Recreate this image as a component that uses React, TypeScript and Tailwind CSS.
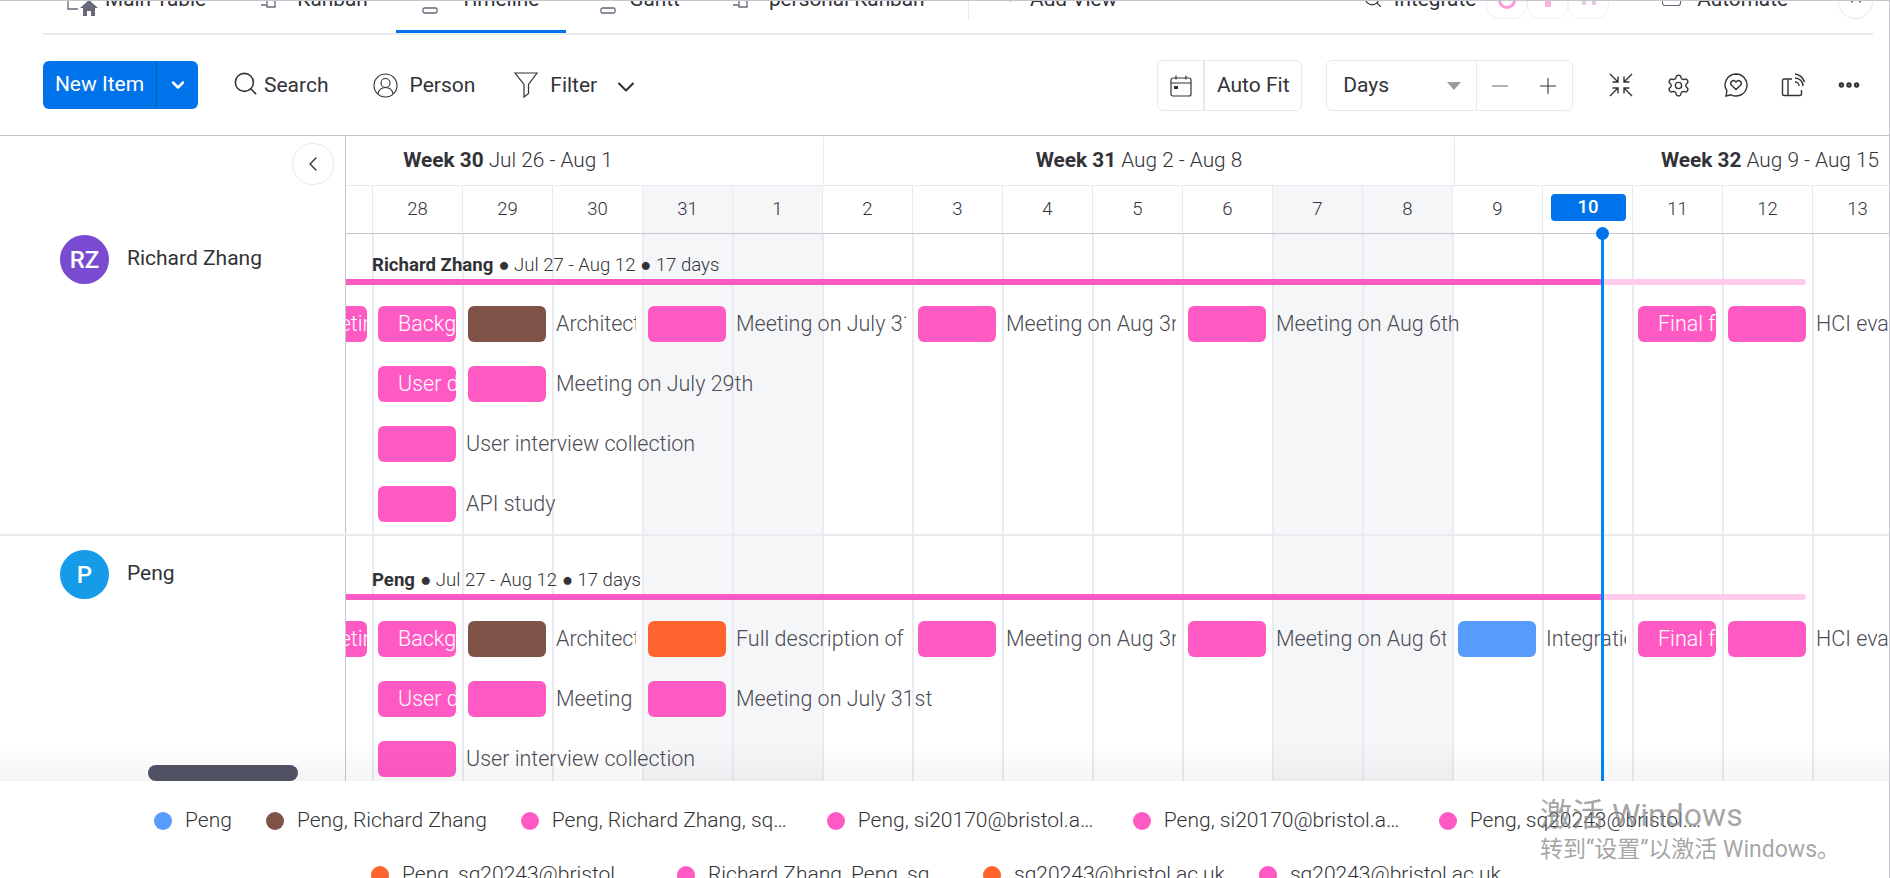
import { Search, ChevronDown, ChevronLeft, ChevronUp, Settings, Plus, Minus, Ellipsis } from "lucide-react"

const PINK = "bg-[#ff5ac4]"
const BROWN = "bg-[#7f5347]"
const ORANGE = "bg-[#ff642e]"
const BLUE = "bg-[#579bfc]"

type Item = {
  col: number
  span: number
  line: number
  color?: string
  inside?: string
  label?: string
  stub?: boolean
}

const days = ["28", "29", "30", "31", "1", "2", "3", "4", "5", "6", "7", "8", "9", "10", "11", "12", "13"]
const weekend = ["31", "1", "7", "8"]

const richardItems: Item[] = [
  { col: 0, span: 1, line: 1, inside: "Meeting", stub: true },
  { col: 1, span: 1, line: 1, inside: "Background research" },
  { col: 2, span: 2, line: 1, color: BROWN, label: "Architecture design" },
  { col: 4, span: 3, line: 1, label: "Meeting on July 31st" },
  { col: 7, span: 3, line: 1, label: "Meeting on Aug 3rd" },
  { col: 10, span: 4, line: 1, label: "Meeting on Aug 6th" },
  { col: 15, span: 1, line: 1, inside: "Final feedback" },
  { col: 16, span: 2, line: 1, label: "HCI evaluation" },
  { col: 1, span: 1, line: 2, inside: "User data" },
  { col: 2, span: 4, line: 2, label: "Meeting on July 29th" },
  { col: 1, span: 4, line: 3, label: "User interview collection" },
  { col: 1, span: 3, line: 4, label: "API study" },
]

const pengItems: Item[] = [
  { col: 0, span: 1, line: 1, inside: "Meeting", stub: true },
  { col: 1, span: 1, line: 1, inside: "Background research" },
  { col: 2, span: 2, line: 1, color: BROWN, label: "Architecture design" },
  { col: 4, span: 3, line: 1, color: ORANGE, label: "Full description of the system" },
  { col: 7, span: 3, line: 1, label: "Meeting on Aug 3rd" },
  { col: 10, span: 3, line: 1, label: "Meeting on Aug 6th" },
  { col: 13, span: 2, line: 1, color: BLUE, label: "Integration" },
  { col: 15, span: 1, line: 1, inside: "Final feedback" },
  { col: 16, span: 2, line: 1, label: "HCI evaluation" },
  { col: 1, span: 1, line: 2, inside: "User data" },
  { col: 2, span: 2, line: 2, label: "Meeting on July 29th" },
  { col: 4, span: 4, line: 2, label: "Meeting on July 31st" },
  { col: 1, span: 4, line: 3, label: "User interview collection" },
]

function TabIcon({ kind }: { kind: "kanban" | "pill" }) {
  if (kind === "pill") {
    return (
      <svg width="16" height="9" viewBox="0 0 16 9" fill="none" stroke="#676879" strokeWidth="1.3" className="mt-[14px]">
        <rect x="1" y="3" width="14" height="5" rx="1.5" />
      </svg>
    )
  }
  return (
    <svg width="18" height="20" viewBox="0 0 18 20" fill="none" stroke="#676879" strokeWidth="1.3">
      <path d="M1 4h6M7 0v6h8V0" />
    </svg>
  )
}

function TopTabs() {
  return (
    <div className="h-[34px] ml-[43px] mr-[16px] border-b-2 border-[#e6e9ef] flex text-[20.8px] leading-6 text-[#323338] relative overflow-hidden">
      <div className="w-[202px] flex">
        <svg width="32" height="16" viewBox="0 0 32 16" className="ml-[24px] shrink-0">
          <path d="M1 0v8h10" fill="none" stroke="#676879" strokeWidth="1.3" />
          <path d="M13 7l9-8 9 8h-3v8h-4V10h-4v5h-4V7z" fill="#676879" />
        </svg>
        <span className="ml-[6px] -mt-[14px]">Main Table</span>
      </div>
      <div className="w-[152px] flex">
        <div className="ml-[16px] shrink-0"><TabIcon kind="kanban" /></div>
        <span className="ml-[19px] -mt-[14px]">Kanban</span>
      </div>
      <div className="w-[171px] h-[32px] border-b-[3px] border-[#0073ea] flex">
        <div className="ml-[26px] -mt-[10px] shrink-0"><TabIcon kind="pill" /></div>
        <span className="ml-[22px] -mt-[14px]">Timeline</span>
      </div>
      <div className="w-[135px] flex">
        <div className="ml-[34px] -mt-[10px] shrink-0"><TabIcon kind="pill" /></div>
        <span className="ml-[13px] -mt-[14px]">Gantt</span>
      </div>
      <div className="w-[269px] h-[19px] border-r border-[#e6e9ef] flex">
        <div className="ml-[31px] shrink-0"><TabIcon kind="kanban" /></div>
        <span className="ml-[19px] -mt-[14px]">personal Kanban</span>
      </div>
      <div className="w-[395px] flex">
        <Plus size={18} strokeWidth={1.3} className="ml-[32px] -mt-[14px] text-[#676879]" />
        <span className="ml-[11px] -mt-[14px]">Add View</span>
      </div>
      <div className="flex">
        <Search size={20} strokeWidth={1.4} className="-mt-[12px] text-[#323338]" />
        <span className="ml-[11px] -mt-[14px]">Integrate</span>
        <div className="flex ml-[10px]">
          <div className="w-[41px] h-[18px] flex justify-center rounded-b-[14px] border-b border-x border-[#f0f1f4]">
            <div className="w-[18px] h-[18px] -mt-[10px] rounded-full border-[3px] border-[#fd9bd9]" />
          </div>
          <div className="w-[41px] h-[18px] flex justify-center rounded-b-[14px] border-b border-x border-[#f0f1f4]">
            <div className="w-[6px] h-[6px] bg-[#fbb0e0]" />
          </div>
          <div className="w-[41px] h-[18px] flex justify-center gap-[6px] rounded-b-[14px] border-b border-x border-[#f0f1f4]">
            <div className="w-[4px] h-[4px] bg-[#e6cbdc]" />
            <div className="w-[4px] h-[4px] bg-[#e6cbdc]" />
          </div>
        </div>
        <div className="ml-[53px] w-[19px] h-[5px] border-x-[1.5px] border-b-[1.5px] rounded-b-[3px] border-[#676879]" />
        <span className="ml-[16px] -mt-[14px]">Automate</span>
        <div className="ml-[50px] w-[35px] h-[18px] rounded-b-full border-x border-b border-[#e6e9ef] flex justify-center">
          <ChevronUp size={18} strokeWidth={1.4} className="-mt-[10px] text-[#323338]" />
        </div>
      </div>
    </div>
  )
}

function ShrinkIcon() {
  return (
    <svg width="24" height="24" viewBox="0 0 24 24" fill="none" stroke="#323338" strokeWidth="1.4">
      <path d="M1 1l8 8M9 3.5V9H3.5M23 1l-8 8M15 3.5V9h5.5M1 23l8-8M9 20.5V15H3.5M23 23l-8-8M15 20.5V15h5.5" />
    </svg>
  )
}

function HeartChatIcon() {
  return (
    <svg width="24" height="24" viewBox="0 0 24 24" fill="none" stroke="#323338" strokeWidth="1.4">
      <path d="M12 1a11 11 0 1 1-5 20.8L2 23l.9-5A11 11 0 0 1 12 1z" />
      <path d="M12 16.5l-4.6-4.4a2.7 2.7 0 0 1 3.8-3.8l.8.8.8-.8a2.7 2.7 0 0 1 3.8 3.8z" />
    </svg>
  )
}

function FeedIcon() {
  return (
    <svg width="24" height="24" viewBox="0 0 24 24" fill="none" stroke="#323338" strokeWidth="1.4">
      <path d="M11 6H3a1.500 1.500 0 0 0-1.500 1.500V21A1.500 1.500 0 0 0 3 22.500h16a1.500 1.500 0 0 0 1.500-1.500v-4" />
      <path d="M7 6.500v16" />
      <path d="M14 9a4 4 0 0 1 4 4M14 5a8 8 0 0 1 8 8M14 1a12 12 0 0 1 9.500 8" />
    </svg>
  )
}

function PersonIcon() {
  return (
    <svg width="25" height="25" viewBox="0 0 25 25" fill="none" stroke="#323338" strokeWidth="1.1">
      <circle cx="12.500" cy="12.500" r="11.500" />
      <circle cx="12.500" cy="10" r="4.500" />
      <path d="M4.800 21c1-4 4-6.500 7.700-6.500s6.700 2.500 7.700 6.500" />
    </svg>
  )
}

function FunnelIcon() {
  return (
    <svg width="24" height="26" viewBox="0 0 24 26" fill="none" stroke="#323338" strokeWidth="1.2">
      <path d="M1 1h22l-8.500 11.500v9L10 25V12.500z" />
    </svg>
  )
}

function CalendarIcon() {
  return (
    <svg width="22" height="22" viewBox="0 0 22 22" fill="none" stroke="#323338" strokeWidth="1.2">
      <rect x="1" y="3" width="20" height="18" rx="2" />
      <path d="M1 8h20M6 0.500v4M16 0.500v4" />
      <rect x="4" y="11" width="4" height="3" fill="#323338" stroke="none" />
    </svg>
  )
}

function Toolbar() {
  return (
    <div className="h-[101px] border-b border-[#c5c7d0] flex items-start pt-[26px] text-[#323338] text-[21px]">
      <div className="ml-[43px] w-[155px] h-[48px] rounded-[6px] bg-[#0073ea] flex text-white">
        <div className="w-[114px] h-full flex items-center justify-center border-r border-[#0060b9]">New Item</div>
        <div className="flex-1 flex items-center justify-center">
          <ChevronDown size={20} strokeWidth={3} />
        </div>
      </div>
      <div className="ml-[34px] h-[48px] flex items-center">
        <Search size={27} strokeWidth={1.4} className="-mt-[3px]" />
        <span className="ml-[5px] mt-[2px]">Search</span>
      </div>
      <div className="ml-[44px] h-[48px] flex items-center">
        <PersonIcon />
        <span className="ml-[12px] mt-[2px]">Person</span>
      </div>
      <div className="ml-[39px] h-[48px] flex items-center">
        <FunnelIcon />
        <span className="ml-[12px] mt-[2px]">Filter</span>
        <ChevronDown size={28} strokeWidth={1.8} className="ml-[15px] mt-[4px]" />
      </div>
      <div className="ml-[517px] w-[145px] h-[51px] -mt-[1px] border border-[#e6e9ef] rounded-[6px] flex">
        <div className="w-[47px] border-r-2 border-[#e6e9ef] flex items-center justify-center">
          <CalendarIcon />
        </div>
        <div className="flex-1 flex items-center justify-center">Auto Fit</div>
      </div>
      <div className="ml-[24px] w-[247px] h-[51px] -mt-[1px] border border-[#e6e9ef] rounded-[6px] flex">
        <div className="w-[150px] border-r border-[#e6e9ef] flex items-center pl-[16px]">
          <span>Days</span>
          <span className="ml-[58px] mt-[1px] w-0 h-0 border-x-[7px] border-x-transparent border-t-[8px] border-t-[#9a9a9f]" />
        </div>
        <div className="flex-1 flex items-center text-[#676879]">
          <Minus size={26} strokeWidth={1} className="ml-[10px]" />
          <Plus size={26} strokeWidth={1} className="ml-[22px] text-[#323338]" />
        </div>
      </div>
      <div className="ml-[36px] h-[48px] flex items-center gap-[33px]">
        <ShrinkIcon />
        <Settings size={25} strokeWidth={1.3} />
        <HeartChatIcon />
        <FeedIcon />
        <Ellipsis size={26} strokeWidth={3} className="-ml-[2px]" />
      </div>
    </div>
  )
}

function TimelineHeader() {
  return (
    <div className="flex h-[98px]">
      <div className="w-[346px] shrink-0 border-r border-[#c5c7d0] flex justify-end pr-[11px] pt-[7px]">
        <div className="w-[42px] h-[42px] rounded-full border border-[#e6e9ef] flex items-center justify-center bg-white">
          <ChevronLeft size={24} strokeWidth={1.4} className="text-[#323338]" />
        </div>
      </div>
      <div className="flex-1 min-w-0 overflow-hidden">
        <div className="h-[49px] pt-[1px] flex -ml-[153px] text-[20.8px] text-[#323338]">
          <WeekCell name="Week 30" range="Jul 26 - Aug 1" />
          <WeekCell name="Week 31" range="Aug 2 - Aug 8" />
          <WeekCell name="Week 32" range="Aug 9 - Aug 15" />
        </div>
        <div className="h-[49px] flex border-t border-[#e6e9ef] border-b border-b-[#c5c7d0]">
          <div className="w-[26px] shrink-0" />
          {days.map((d) => (
            <div
              key={d}
              className={
                "w-[90px] shrink-0 border-l border-[#e6e9ef] flex items-center justify-center text-[18.5px] font-light text-[#323338] " +
                (weekend.includes(d) ? "bg-[#f5f6f8]" : "")
              }
            >
              {d === "10" ? (
                <span className="w-[75px] h-[27px] -mt-[4px] ml-[1px] rounded-[4px] bg-[#0073ea] text-white font-medium flex items-center justify-center">10</span>
              ) : (
                d
              )}
            </div>
          ))}
        </div>
      </div>
    </div>
  )
}

function WeekCell({ name, range }: { name: string; range: string }) {
  return (
    <div className="w-[631px] shrink-0 border-r border-[#e6e9ef] flex items-center justify-center gap-[5px]">
      <span className="font-bold">{name}</span>
      <span className="font-light">{range}</span>
    </div>
  )
}

function GridLines() {
  return (
    <div className="absolute top-0 bottom-0 left-[346px] right-0 flex overflow-hidden">
      <div className="w-[26px] shrink-0" />
      {days.map((d) => (
        <div
          key={d}
          className={"w-[90px] shrink-0 border-l-2 border-[#e9ebf1] " + (weekend.includes(d) ? "bg-[#f5f6f8]" : "")}
        />
      ))}
    </div>
  )
}

function Bar({ item }: { item: Item }) {
  const color = item.color ?? PINK
  return (
    <div
      className={"min-w-0 " + (item.stub ? "" : "px-[6px]")}
      style={{ gridColumn: `${item.col + 1} / span ${item.span}`, gridRow: item.line }}
    >
      <div className="overflow-hidden flex items-center min-w-0">
        <div
          className={
            "h-[36px] shrink-0 overflow-hidden whitespace-nowrap flex items-center text-white text-[21.5px] font-light " +
            color +
            (item.stub
              ? " w-[77px] -ml-[56px] rounded-[6px] pl-[20px]"
              : " w-[78px] rounded-[6px] pl-[20px]")
          }
        >
          {item.inside}
        </div>
        {item.label && (
          <span className="ml-[10px] whitespace-nowrap text-[21.5px] font-light text-[#4b4c55]">{item.label}</span>
        )}
      </div>
    </div>
  )
}

function PersonRow({
  name,
  initials,
  avatar,
  top,
  items,
  height,
  border,
}: {
  name: string
  initials: string
  avatar: string
  top: number
  items: Item[]
  height: string
  border: boolean
}) {
  return (
    <div className={"relative flex shrink-0 " + height + (border ? " border-b-2 border-[#e9ebf1]" : "")}>
      <div className="w-[346px] shrink-0 border-r border-[#c5c7d0] bg-white pl-[60px]" style={{ paddingTop: top }}>
        <div className="flex items-center gap-[18px]">
          <div className={"w-[49px] h-[49px] rounded-full flex items-center justify-center text-white text-[24px] font-medium " + avatar}>
            {initials}
          </div>
          <span className="text-[21px] text-[#323338] -mt-[2px]">{name}</span>
        </div>
      </div>
      <div className="flex-1 min-w-0 overflow-hidden" style={{ paddingTop: top + 20 }}>
        <div className="h-[20px] mt-[1px] -mb-[1px] ml-[26px] flex items-center text-[18.6px] font-light text-[#323338] whitespace-nowrap gap-[5px]">
          <span className="font-bold">{name}</span>
          <span>● Jul 27 - Aug 12 ● 17 days</span>
        </div>
        <div className="mt-[4px] h-[6px] w-[1460px] flex">
          <div className="w-[1256px] bg-[#ff5ac4]" />
          <div className="flex-1 bg-[#ffcbed] rounded-r-[3px]" />
        </div>
        <div className="mt-[21px] grid grid-cols-[26px_repeat(17,90px)] auto-rows-[36px] gap-y-[24px]">
          {items.map((it) => (
            <Bar key={`${it.col}-${it.line}`} item={it} />
          ))}
        </div>
      </div>
    </div>
  )
}

const legendTop = [
  { color: BLUE, text: "Peng" },
  { color: BROWN, text: "Peng, Richard Zhang" },
  { color: PINK, text: "Peng, Richard Zhang, sq20243@bristol.ac.uk" },
  { color: PINK, text: "Peng, si20170@bristol.ac.uk, Richard" },
  { color: PINK, text: "Peng, si20170@bristol.ac.uk, sq20243" },
  { color: PINK, text: "Peng, sq20243@bristol.ac.uk, Richard" },
]

const legendBottom = [
  { color: ORANGE, text: "Peng, sq20243@bristol.ac.uk, si20170" },
  { color: PINK, text: "Richard Zhang, Peng, sq20243@bristol.ac.uk" },
  { color: ORANGE, text: "sq20243@bristol.ac.uk" },
  { color: PINK, text: "sq20243@bristol.ac.uk" },
]

function LegendRow({ items, left }: { items: { color: string; text: string }[]; left: string }) {
  return (
    <div className={"h-[54px] flex items-center gap-[34px] " + left}>
      {items.map((l) => (
        <div key={l.text} className="flex items-center gap-[13px]">
          <span className={"w-[18px] h-[18px] rounded-full shrink-0 " + l.color} />
          <span className="max-w-[241px] truncate text-[21px] font-light text-[#323338]">{l.text}</span>
        </div>
      ))}
    </div>
  )
}

export default function App() {
  return (
    <div
      className="relative w-[1890px] h-[878px] overflow-hidden bg-white border-t border-[#c5c7d0] border-r"
      style={{ fontFamily: "Roboto, sans-serif" }}
    >
      <TopTabs />
      <Toolbar />
      <TimelineHeader />

      <div className="relative h-[547px] flex flex-col">
        <GridLines />
        <PersonRow
          name="Richard Zhang"
          initials="RZ"
          avatar="bg-[#784bd1]"
          top={1}
          items={richardItems}
          height="h-[302px]"
          border
        />
        <PersonRow
          name="Peng"
          initials="P"
          avatar="bg-[#169be8]"
          top={14}
          items={pengItems}
          height="h-[245px]"
          border={false}
        />
        {/* today marker */}
        <div className="absolute top-0 bottom-0 left-[1601px] w-[3px] bg-[#0085ff]" />
        <div className="absolute top-[-7px] left-[1596px] w-[13px] h-[13px] rounded-full bg-[#0073ea]" />
        <div className="absolute inset-x-0 bottom-0 h-[36px] bg-linear-to-b from-transparent to-black/[0.04]" />
        <div className="absolute bottom-0 left-[148px] w-[150px] h-[16px] rounded-full bg-[#4f5163]" />
      </div>

      <div className="pt-[13px]">
        <LegendRow items={legendTop} left="pl-[154px]" />
        <LegendRow items={legendBottom} left="pl-[371px]" />
      </div>

      {/* windows activation watermark */}
      <div className="absolute left-[1540px] top-[794px] text-[#888888]/75" style={{ fontFamily: "Roboto, 'Noto Sans CJK SC', sans-serif" }}>
        <div className="text-[32px] leading-[40px]">激活 Windows</div>
        <div className="text-[23px] leading-[30px]">转到“设置”以激活 Windows。</div>
      </div>
    </div>
  )
}
